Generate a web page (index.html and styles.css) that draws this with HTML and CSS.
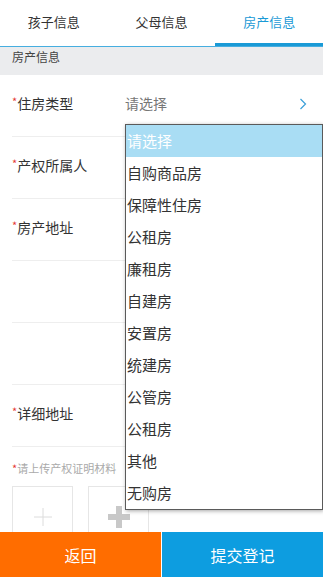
FILE: index.html
```html
<!DOCTYPE html>
<html lang="zh-CN">
<head>
    <meta charset="UTF-8">
    <meta name="viewport" content="width=device-width, initial-scale=1.0">
    <title>房产信息</title>
    <link rel="stylesheet" href="styles.css">
</head>
<body>
    <div class="tabs">
        <div class="tab">孩子信息</div>
        <div class="tab">父母信息</div>
        <div class="tab active">房产信息</div>
    </div>

    <div class="section-title">房产信息</div>

    <div class="form">
        <div class="row">
            <label class="label"><span class="req">*</span>住房类型</label>
            <span class="value">请选择</span>
            <svg class="chevron" width="8" height="12" viewBox="0 0 8 12">
                <path d="M1.5 1 L6.5 6 L1.5 11" fill="none" stroke="#3a9fd8" stroke-width="1.2"/>
            </svg>
        </div>
        <div class="row">
            <label class="label"><span class="req">*</span>产权所属人</label>
        </div>
        <div class="row">
            <label class="label"><span class="req">*</span>房产地址</label>
        </div>
        <div class="row"></div>
        <div class="row"></div>
        <div class="row">
            <label class="label"><span class="req">*</span>详细地址</label>
        </div>

        <p class="note"><span class="req">*</span>请上传产权证明材料</p>
        <div class="uploads">
            <div class="upload">
                <svg width="20" height="20" viewBox="0 0 20 20">
                    <path d="M10 1 V19 M1 10 H19" stroke="#dcdcdc" stroke-width="1"/>
                </svg>
            </div>
            <div class="upload">
                <svg width="24" height="24" viewBox="0 0 24 24">
                    <path d="M12 1 V23 M1 12 H23" stroke="#c8c8c8" stroke-width="6"/>
                </svg>
            </div>
        </div>
    </div>

    <ul class="dropdown">
        <li class="selected">请选择</li>
        <li>自购商品房</li>
        <li>保障性住房</li>
        <li>公租房</li>
        <li>廉租房</li>
        <li>自建房</li>
        <li>安置房</li>
        <li>统建房</li>
        <li>公管房</li>
        <li>公租房</li>
        <li>其他</li>
        <li>无购房</li>
    </ul>

    <div class="footer">
        <button class="btn back">返回</button>
        <button class="btn submit">提交登记</button>
    </div>
</body>
</html>
```

FILE: styles.css
```css
body {
    margin: 0;
    font-family: "Noto Sans CJK SC", "Noto Sans", sans-serif;
    background-color: #ffffff;
    color: #333;
    width: 323px;
    height: 577px;
    overflow: hidden;
}

.tabs {
    display: flex;
    height: 46px;
    border-bottom: 1px solid #46aee0;
}

.tab {
    flex: 1;
    text-align: center;
    font-size: 13px;
    line-height: 44px;
    color: #333;
}

.tab.active {
    color: #1a9ad6;
    box-shadow: inset 0 -3px #1a9ad6;
}

.section-title {
    background-color: #ebecee;
    height: 28px;
    padding-left: 12px;
    font-size: 12px;
    line-height: 20px;
    color: #444;
}

.form {
    padding-left: 12px;
}

.row {
    display: flex;
    align-items: center;
    height: 55px;
    padding-bottom: 6px;
    border-bottom: 1px solid #eeeeee;
}

.label {
    width: 113px;
    font-size: 14px;
    color: #333;
}

.req {
    color: #e53935;
    font-size: 11px;
    vertical-align: top;
}

.value {
    flex: 1;
    font-size: 14px;
    color: #777;
}

.chevron {
    margin-right: 16px;
    margin-top: 3px;
}

.note {
    margin: 14px 0 0;
    font-size: 11px;
    line-height: 14px;
    color: #aaa;
}

.note .req {
    font-size: 11px;
    vertical-align: baseline;
}

.uploads {
    display: flex;
    gap: 15px;
    margin-top: 11px;
}

.upload {
    width: 59px;
    height: 60px;
    border: 1px solid #e6e6e6;
    display: flex;
    align-items: center;
    justify-content: center;
}

.dropdown {
    position: absolute;
    top: 124px;
    left: 125px;
    width: 196px;
    margin: 0;
    padding: 0;
    list-style: none;
    background-color: #ffffff;
    border: 1px solid #5a5a5a;
    box-shadow: 1px 1px 4px rgba(0, 0, 0, 0.35);
}

.dropdown li {
    height: 32px;
    line-height: 32px;
    padding-left: 1px;
    font-size: 15px;
    color: #333;
}

.dropdown li.selected {
    background-color: #a9ddf4;
    color: #ffffff;
}

.footer {
    position: fixed;
    left: 0;
    right: 0;
    bottom: 0;
    display: flex;
    height: 45px;
}

.btn {
    flex: 1;
    border: none;
    font-family: inherit;
    font-size: 16px;
    color: #ffffff;
    padding: 0;
}

.back {
    background-color: #ff6d00;
}

.submit {
    background-color: #0d9de0;
    border-left: 1px solid #ffffff;
}
```
